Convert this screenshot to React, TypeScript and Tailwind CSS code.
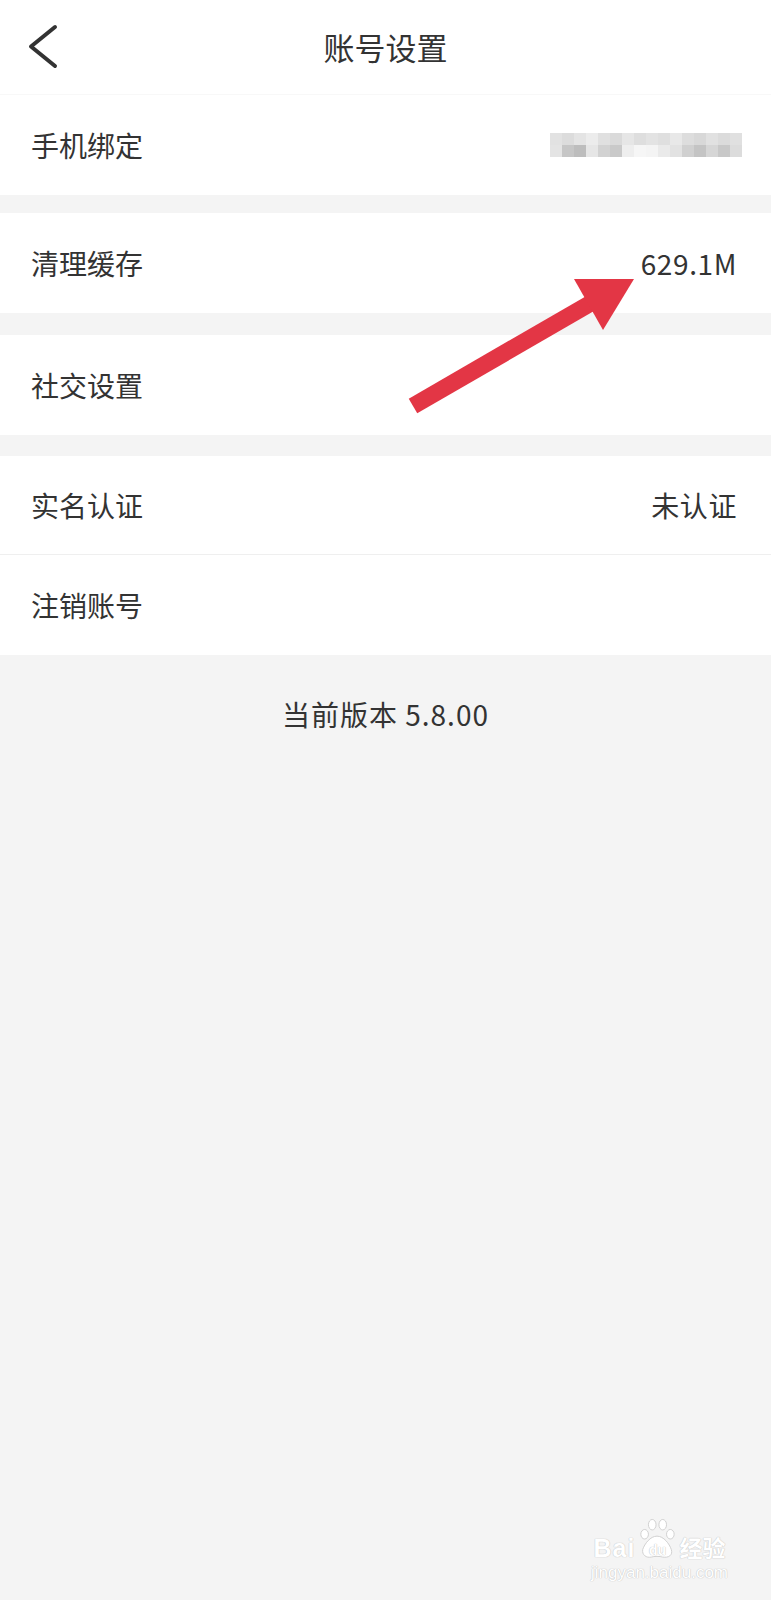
import React from "react";

const phoneBlur = [
  ["bg-[#e2e2e2]", "bg-[#dcdcdc]", "bg-[#e4e4e4]", "bg-[#ececec]", "bg-[#e0e0e0]", "bg-[#dadada]", "bg-[#e6e6e6]", "bg-[#dedede]", "bg-[#e3e3e3]", "bg-[#dfdfdf]", "bg-[#e8e8e8]", "bg-[#dddddd]", "bg-[#d8d8d8]", "bg-[#e1e1e1]", "bg-[#dbdbdb]", "bg-[#e0e0e0]"],
  ["bg-[#e4e4e4]", "bg-[#c6c6c6]", "bg-[#bdbdbd]", "bg-[#e6e6e6]", "bg-[#d2d2d2]", "bg-[#c9c9c9]", "bg-[#eeeeee]", "bg-[#f6f6f6]", "bg-[#f4f4f4]", "bg-[#eaeaea]", "bg-[#e2e2e2]", "bg-[#d0d0d0]", "bg-[#c4c4c4]", "bg-[#d6d6d6]", "bg-[#c8c8c8]", "bg-[#dcdcdc]"],
];

function Row({ label, value, h = "h-[100px]", children }: { label: string; value?: string; h?: string; children?: React.ReactNode }) {
  return (
    <div className={`${h} bg-white flex items-center justify-between pl-[31px] pr-[34px]`}>
      <span className="text-[28px] text-[#333333]">{label}</span>
      {value && <span className="text-[28px] text-[#333333] tracking-[0.6px]">{value}</span>}
      {children}
    </div>
  );
}

export default function App() {
  return (
    <div className="relative w-[771px] min-h-[1600px] bg-[#f4f4f4] font-['Noto_Sans_CJK_SC','Noto_Sans',sans-serif] text-[#333333] overflow-hidden">
      <header className="h-[95px] bg-white grid grid-cols-[120px_1fr_120px] items-center border-b border-[#f8f8f8]">
        <div className="pl-[27px] flex items-center">
          <svg width="32" height="46" viewBox="0 0 32 46" fill="none">
            <path d="M28 3 L4 22.5 L28 42" stroke="#333333" strokeWidth="4" strokeLinecap="round" strokeLinejoin="round" />
          </svg>
        </div>
        <h1 className="text-center text-[31px] font-normal text-[#333333]">账号设置</h1>
        <div />
      </header>

      <Row label="手机绑定">
        <div className="mr-[-5px] rounded-sm shadow-[0_0_12px_6px_#ffffff] flex flex-col">
          {phoneBlur.map((line, r) => (
            <div key={r} className="flex">
              {line.map((c, i) => (
                <div key={i} className={`w-[12px] h-[12px] ${c}`} />
              ))}
            </div>
          ))}
        </div>
      </Row>

      <div className="mt-[18px]">
        <Row label="清理缓存" value="629.1M" />
      </div>

      <div className="mt-[22px]">
        <Row label="社交设置" />
      </div>

      <div className="mt-[21px]">
        <Row label="实名认证" value="未认证" h="h-[98px]" />
        <div className="h-px bg-[#efefef]" />
        <Row label="注销账号" />
      </div>

      <p className="pt-[38px] text-center text-[28px] leading-[42px] tracking-[1px] text-[#333333]">当前版本 5.8.00</p>

      {/* annotation arrow */}
      <svg className="absolute left-0 top-0 pointer-events-none" width="771" height="500" viewBox="0 0 771 500">
        <line x1="413" y1="406" x2="598" y2="299" stroke="#e33645" strokeWidth="17" />
        <polygon points="634,279 574,279 603,330" fill="#e33645" />
      </svg>

      {/* watermark */}
      <div className="absolute right-[43px] bottom-[17px] flex flex-col items-center text-white [text-shadow:0_0_1px_#c4c4c4,0_0_1px_#c4c4c4]">
        <div className="flex items-end h-[44px]">
          <span className="font-['Liberation_Sans',sans-serif] font-bold text-[25px] leading-[26px] tracking-[1px]">Bai</span>
          <div className="relative w-[40px] h-[44px] mx-[2px]">
            <svg className="absolute inset-0" width="40" height="44" viewBox="0 0 42 44">
              <g fill="#ffffff" stroke="#cfcfcf" strokeWidth="1">
                <ellipse cx="8" cy="17" rx="4" ry="5" />
                <ellipse cx="16" cy="7" rx="4" ry="5.5" />
                <ellipse cx="27" cy="7" rx="4" ry="5.5" />
                <ellipse cx="35" cy="17" rx="4" ry="5" />
                <path d="M21 19 C14 19 8 27 6 33 C5 39 10 42 15 41 C18 40 24 40 27 41 C33 42 38 39 36 33 C34 27 28 19 21 19 Z" />
              </g>
            </svg>
            <span className="absolute left-0 right-0 bottom-[4px] text-center font-['Liberation_Sans',sans-serif] font-bold text-[14px] leading-[14px] text-white">du</span>
          </div>
          <span className="text-[23px] leading-[28px] font-bold">经验</span>
        </div>
        <span className="font-['Liberation_Sans',sans-serif] text-[17px] leading-[20px] mt-[2px]">jingyan.baidu.com</span>
      </div>
    </div>
  );
}
